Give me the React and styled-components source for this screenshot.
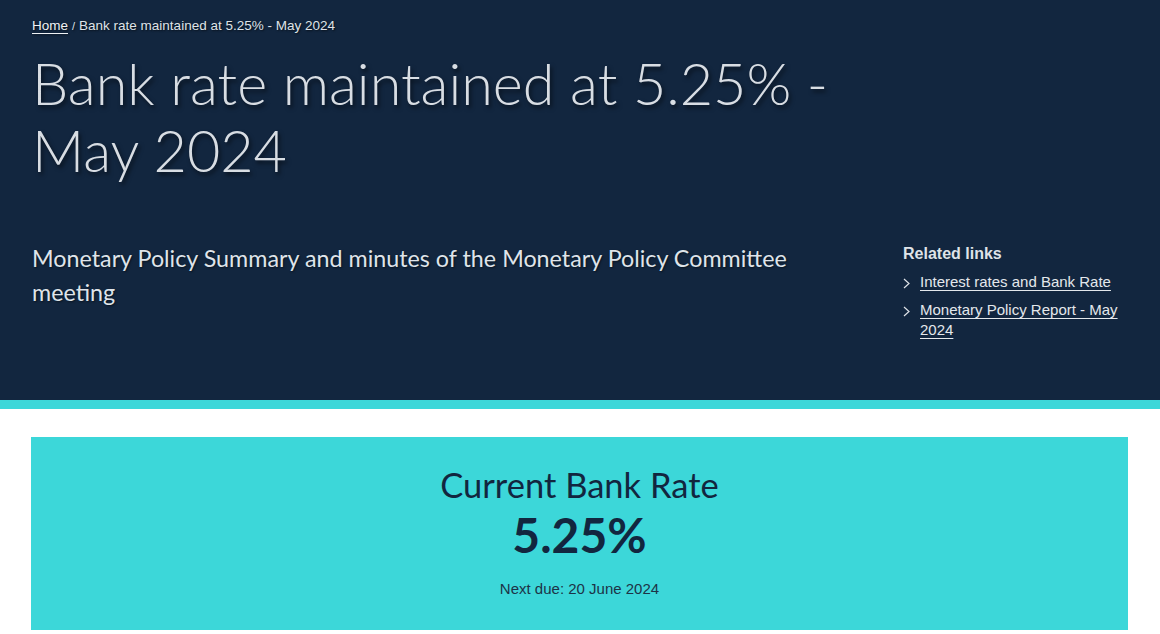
import React from 'react';
import styled, { createGlobalStyle } from 'styled-components';

const GlobalStyle = createGlobalStyle`
    body {
        margin: 0;
        background: #ffffff;
        font-family: "Liberation Sans", Arial, sans-serif;
    }
`;

const Hero = styled.header`
    background: #12263f;
    height: 400px;
    border-bottom: 9px solid #3cd7d9;
    box-sizing: content-box;
    padding: 0 32px;
    color: #dfe3e8;
`;

const Breadcrumb = styled.nav`
    padding-top: 17px;
    font-size: 13.5px;
    line-height: 18px;
    text-shadow: 1px 1px 2px rgba(0, 0, 0, 0.6);
`;

const CrumbLink = styled.a`
    color: #eef1f4;
    text-decoration: underline;
    text-underline-offset: 3px;
`;

const Sep = styled.span`
    margin: 0 4px;
    font-size: 11px;
`;

const Title = styled.h1`
    margin: 14px 0 0;
    max-width: 820px;
    font-family: Lato, "Noto Sans", sans-serif;
    font-weight: 300;
    font-size: 57.5px;
    line-height: 67px;
    color: #d8dde3;
    text-shadow: 2px 3px 4px rgba(0, 0, 0, 0.55);
`;

const Row = styled.div`
    display: flex;
    justify-content: space-between;
    margin-top: 58px;
`;

const Summary = styled.p`
    margin: 0;
    width: 790px;
    font-family: Lato, "Noto Sans", sans-serif;
    font-size: 23.3px;
    line-height: 34px;
    color: #dfe4ea;
    text-shadow: 1px 1px 2px rgba(0, 0, 0, 0.5);
`;

const Related = styled.aside`
    width: 225px;
    padding-top: 3px;
`;

const RelatedTitle = styled.h3`
    margin: 0 0 8px;
    font-size: 16px;
    line-height: 20px;
    font-weight: bold;
    color: #dfe3e8;
`;

const LinkList = styled.ul`
    list-style: none;
    margin: 0;
    padding: 0;
`;

const LinkItem = styled.li`
    display: flex;
    align-items: flex-start;
    gap: 10px;
    margin-bottom: 8px;
    font-size: 15px;
    line-height: 20px;
`;

const Chevron = styled.svg`
    flex: none;
    margin-top: 6px;
`;

const RelLink = styled.a`
    color: #e4e8ec;
    text-decoration: underline;
    text-underline-offset: 3px;
`;

const Main = styled.main`
    padding: 28px 32px 0 31px;
`;

const RateBox = styled.section`
    background: #3cd7d9;
    width: 1097px;
    height: 193px;
    box-sizing: border-box;
    padding-top: 28px;
    text-align: center;
    color: #12263f;
`;

const RateLabel = styled.div`
    font-family: Lato, "Noto Sans", sans-serif;
    font-size: 34.5px;
    line-height: 40px;
`;

const RateValue = styled.div`
    font-family: Lato, "Noto Sans", sans-serif;
    font-weight: 700;
    font-size: 48px;
    line-height: 58px;
    margin-top: 1px;
`;

const NextDue = styled.div`
    margin-top: 16px;
    font-size: 15px;
    line-height: 18px;
    color: #1d3347;
`;

const ChevronIcon = () => (
    <Chevron width="7" height="11" viewBox="0 0 7 11">
        <path d="M1 1 L6 5.5 L1 10" fill="none" stroke="#dfe3e8" strokeWidth="1.2" />
    </Chevron>
);

const App = () => {
    return (
        <>
            <GlobalStyle />
            <Hero>
                <Breadcrumb>
                    <CrumbLink href="#">Home</CrumbLink>
                    <Sep>/</Sep>
                    Bank rate maintained at 5.25% - May 2024
                </Breadcrumb>
                <Title>Bank rate maintained at 5.25% - May 2024</Title>
                <Row>
                    <Summary>Monetary Policy Summary and minutes of the Monetary Policy Committee meeting</Summary>
                    <Related>
                        <RelatedTitle>Related links</RelatedTitle>
                        <LinkList>
                            <LinkItem>
                                <ChevronIcon />
                                <RelLink href="#">Interest rates and Bank Rate</RelLink>
                            </LinkItem>
                            <LinkItem>
                                <ChevronIcon />
                                <RelLink href="#">Monetary Policy Report - May 2024</RelLink>
                            </LinkItem>
                        </LinkList>
                    </Related>
                </Row>
            </Hero>
            <Main>
                <RateBox>
                    <RateLabel>Current Bank Rate</RateLabel>
                    <RateValue>5.25%</RateValue>
                    <NextDue>Next due: 20 June 2024</NextDue>
                </RateBox>
            </Main>
        </>
    );
};

export default App;
